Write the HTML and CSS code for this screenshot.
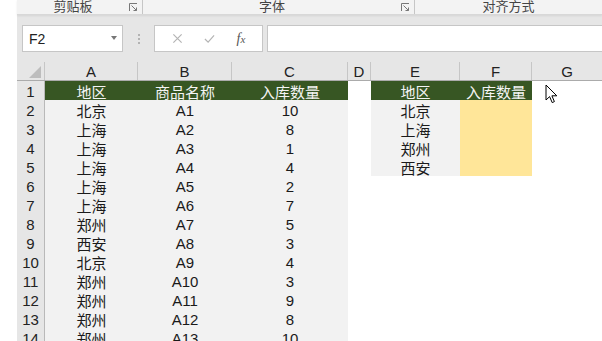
FILE: index.html
```html
<!DOCTYPE html>
<html lang="zh-CN">

<head>
    <meta charset="UTF-8">
    <title>入库数量</title>
    <link rel="stylesheet" href="styles.css">
</head>

<body>

    <div class="app">

        <!-- Ribbon group labels -->
        <div class="ribbon">
            <div class="group">
                <span class="group-label">剪贴板</span>
                <svg class="launcher" viewBox="0 0 9 9"><path d="M0.5 8V0.5H8M2.5 2.5L7.5 7.5M4.5 7.5H7.5V4.5" /></svg>
            </div>
            <div class="group">
                <span class="group-label">字体</span>
                <svg class="launcher" viewBox="0 0 9 9"><path d="M0.5 8V0.5H8M2.5 2.5L7.5 7.5M4.5 7.5H7.5V4.5" /></svg>
            </div>
            <div class="group group-last">
                <span class="group-label">对齐方式</span>
            </div>
        </div>

        <!-- Formula bar -->
        <div class="formula-bar">
            <div class="name-box">
                <span>F2</span>
                <span class="drop"></span>
            </div>
            <div class="grip"><i></i><i></i><i></i></div>
            <div class="fx-buttons">
                <svg class="btn-icon" viewBox="0 0 12 12"><path d="M1.5 1.5L10.5 10.5M10.5 1.5L1.5 10.5" /></svg>
                <svg class="btn-icon" viewBox="0 0 12 12"><path d="M1 6.5L4.5 10L11 2.5" /></svg>
                <span class="fx">f<small>x</small></span>
            </div>
            <div class="formula-input"></div>
        </div>

        <!-- Sheet -->
        <div class="sheet">
            <div class="row col-heads">
                <div class="corner"><svg viewBox="0 0 12 12"><path d="M12 0V12H0Z" /></svg></div>
                <div class="ch">A</div>
                <div class="ch">B</div>
                <div class="ch">C</div>
                <div class="ch">D</div>
                <div class="ch">E</div>
                <div class="ch">F</div>
                <div class="ch ch-last">G</div>
            </div>

            <div class="row">
                <div class="rh">1</div>
                <div class="c hd">地区</div>
                <div class="c hd">商品名称</div>
                <div class="c hd">入库数量</div>
                <div class="c w"></div>
                <div class="c hd">地区</div>
                <div class="c hd">入库数量</div>
                <div class="c w"></div>
            </div>
            <div class="row">
                <div class="rh">2</div>
                <div class="c g">北京</div>
                <div class="c g">A1</div>
                <div class="c g">10</div>
                <div class="c w"></div>
                <div class="c g">北京</div>
                <div class="c y"></div>
                <div class="c w"></div>
            </div>
            <div class="row">
                <div class="rh">3</div>
                <div class="c g">上海</div>
                <div class="c g">A2</div>
                <div class="c g">8</div>
                <div class="c w"></div>
                <div class="c g">上海</div>
                <div class="c y"></div>
                <div class="c w"></div>
            </div>
            <div class="row">
                <div class="rh">4</div>
                <div class="c g">上海</div>
                <div class="c g">A3</div>
                <div class="c g">1</div>
                <div class="c w"></div>
                <div class="c g">郑州</div>
                <div class="c y"></div>
                <div class="c w"></div>
            </div>
            <div class="row">
                <div class="rh">5</div>
                <div class="c g">上海</div>
                <div class="c g">A4</div>
                <div class="c g">4</div>
                <div class="c w"></div>
                <div class="c g">西安</div>
                <div class="c y"></div>
                <div class="c w"></div>
            </div>
            <div class="row">
                <div class="rh">6</div>
                <div class="c g">上海</div>
                <div class="c g">A5</div>
                <div class="c g">2</div>
                <div class="c w wide"></div>
            </div>
            <div class="row">
                <div class="rh">7</div>
                <div class="c g">上海</div>
                <div class="c g">A6</div>
                <div class="c g">7</div>
                <div class="c w wide"></div>
            </div>
            <div class="row">
                <div class="rh">8</div>
                <div class="c g">郑州</div>
                <div class="c g">A7</div>
                <div class="c g">5</div>
                <div class="c w wide"></div>
            </div>
            <div class="row">
                <div class="rh">9</div>
                <div class="c g">西安</div>
                <div class="c g">A8</div>
                <div class="c g">3</div>
                <div class="c w wide"></div>
            </div>
            <div class="row">
                <div class="rh">10</div>
                <div class="c g">北京</div>
                <div class="c g">A9</div>
                <div class="c g">4</div>
                <div class="c w wide"></div>
            </div>
            <div class="row">
                <div class="rh">11</div>
                <div class="c g">郑州</div>
                <div class="c g">A10</div>
                <div class="c g">3</div>
                <div class="c w wide"></div>
            </div>
            <div class="row">
                <div class="rh">12</div>
                <div class="c g">郑州</div>
                <div class="c g">A11</div>
                <div class="c g">9</div>
                <div class="c w wide"></div>
            </div>
            <div class="row">
                <div class="rh">13</div>
                <div class="c g">郑州</div>
                <div class="c g">A12</div>
                <div class="c g">8</div>
                <div class="c w wide"></div>
            </div>
            <div class="row">
                <div class="rh">14</div>
                <div class="c g">郑州</div>
                <div class="c g">A13</div>
                <div class="c g">10</div>
                <div class="c w wide"></div>
            </div>
        </div>

    </div>

    <!-- Mouse pointer over G1 -->
    <svg class="pointer" viewBox="0 0 13 20">
        <path d="M1 1V16L4.6 12.6L7.2 18.6L9.4 17.6L6.9 11.8H11.8Z" />
    </svg>

</body>

</html>
```

FILE: styles.css
```css
:root {
    --ribbon: #f3f3f3;
    --chrome: #e6e6e6;
    --line: #c6c6c6;
    --green: #375623;
    --cell: #f2f2f2;
    --yellow: #ffe699;
    --text: #1a1a1a;
    --cols: 28px 93px 94px 116px 23px 89px 72px 1fr;
}

* {
    box-sizing: border-box;
}

body {
    margin: 0;
    width: 602px;
    height: 341px;
    overflow: hidden;
    background: #fff;
    color: var(--text);
    font-family: "Liberation Sans", "Noto Sans CJK SC", sans-serif;
    position: relative;
}

.app {
    margin-left: 17px;
}

/* ribbon */

.ribbon {
    display: grid;
    grid-template-columns: 126px 272px 1fr;
    height: 15px;
    background: var(--ribbon);
    border-bottom: 1px solid #d8d8d8;
    box-shadow: 0 1px 2px rgba(0, 0, 0, 0.08);
    position: relative;
    z-index: 1;
}

.group {
    display: flex;
    align-items: flex-start;
    height: 14px;
    border-right: 1px solid var(--line);
}

.group-last {
    border-right: none;
}

.group-label {
    flex: 1;
    text-align: center;
    font-size: 13px;
    line-height: 13px;
    margin-top: 0;
    color: #444;
}

.launcher {
    width: 9px;
    height: 9px;
    margin: 3px 4px 0 0;
    fill: none;
    stroke: #777;
    stroke-width: 1;
}

/* formula bar */

.formula-bar {
    display: flex;
    align-items: flex-start;
    height: 47px;
    padding: 10px 0 0 5px;
    background: var(--chrome);
}

.name-box {
    display: flex;
    align-items: center;
    justify-content: space-between;
    width: 101px;
    height: 27px;
    padding: 0 5px 0 6px;
    background: #fff;
    border: 1px solid var(--line);
    font-size: 14px;
    color: #222;
}

.drop {
    width: 0;
    height: 0;
    border-left: 3.5px solid transparent;
    border-right: 3.5px solid transparent;
    border-top: 4px solid #777;
    margin-top: -2px;
}

.grip {
    width: 31px;
    height: 27px;
    display: flex;
    flex-direction: column;
    align-items: center;
    justify-content: center;
    gap: 2px;
}

.grip i {
    width: 2px;
    height: 2px;
    background: #b3b3b3;
}

.fx-buttons {
    display: flex;
    align-items: center;
    justify-content: space-around;
    width: 109px;
    height: 27px;
    padding: 0 6px;
    background: #fff;
    border: 1px solid var(--line);
}

.btn-icon {
    width: 11px;
    height: 11px;
    fill: none;
    stroke: #b4b4b4;
    stroke-width: 1.3;
}

.fx {
    font-family: "Liberation Serif", serif;
    font-style: italic;
    font-size: 14px;
    color: #555;
}

.fx small {
    font-size: 11px;
}

.formula-input {
    flex: 1;
    height: 27px;
    margin-left: 4px;
    background: #fff;
    border: 1px solid var(--line);
    border-right: none;
}

/* sheet */

.sheet {
    font-size: 15px;
}

.row {
    display: grid;
    grid-template-columns: var(--cols);
    height: 19px;
}

.col-heads {
    background: var(--chrome);
    border-bottom: 1px solid #ababab;
}

.corner {
    display: flex;
    align-items: flex-end;
    justify-content: flex-end;
    padding: 0 3px 2px 0;
    border-right: 1px solid var(--line);
}

.corner svg {
    width: 12px;
    height: 12px;
    fill: #bdbdbd;
}

.ch {
    display: flex;
    align-items: center;
    justify-content: center;
    border-right: 1px solid var(--line);
    color: #222;
    padding-top: 1px;
}

.ch-last {
    border-right: none;
}

.rh {
    display: flex;
    align-items: center;
    justify-content: center;
    background: var(--chrome);
    border-right: 1px solid #b9b9b9;
    border-bottom: 1px solid #f4f4f4;
    color: #222;
}

.c {
    display: flex;
    align-items: center;
    justify-content: center;
    border-bottom: 1px solid #fff;
    white-space: nowrap;
}

.g {
    background: var(--cell);
}

.hd {
    background: var(--green);
    color: #f4f4f4;
}

.y {
    background: var(--yellow);
}

.w {
    background: #fff;
}

.wide {
    grid-column: 5 / -1;
}

/* pointer over the grid */

.pointer {
    position: absolute;
    left: 545px;
    top: 84px;
    width: 13px;
    height: 20px;
    fill: #fff;
    stroke: #000;
    stroke-width: 1;
    stroke-linejoin: round;
}
```
